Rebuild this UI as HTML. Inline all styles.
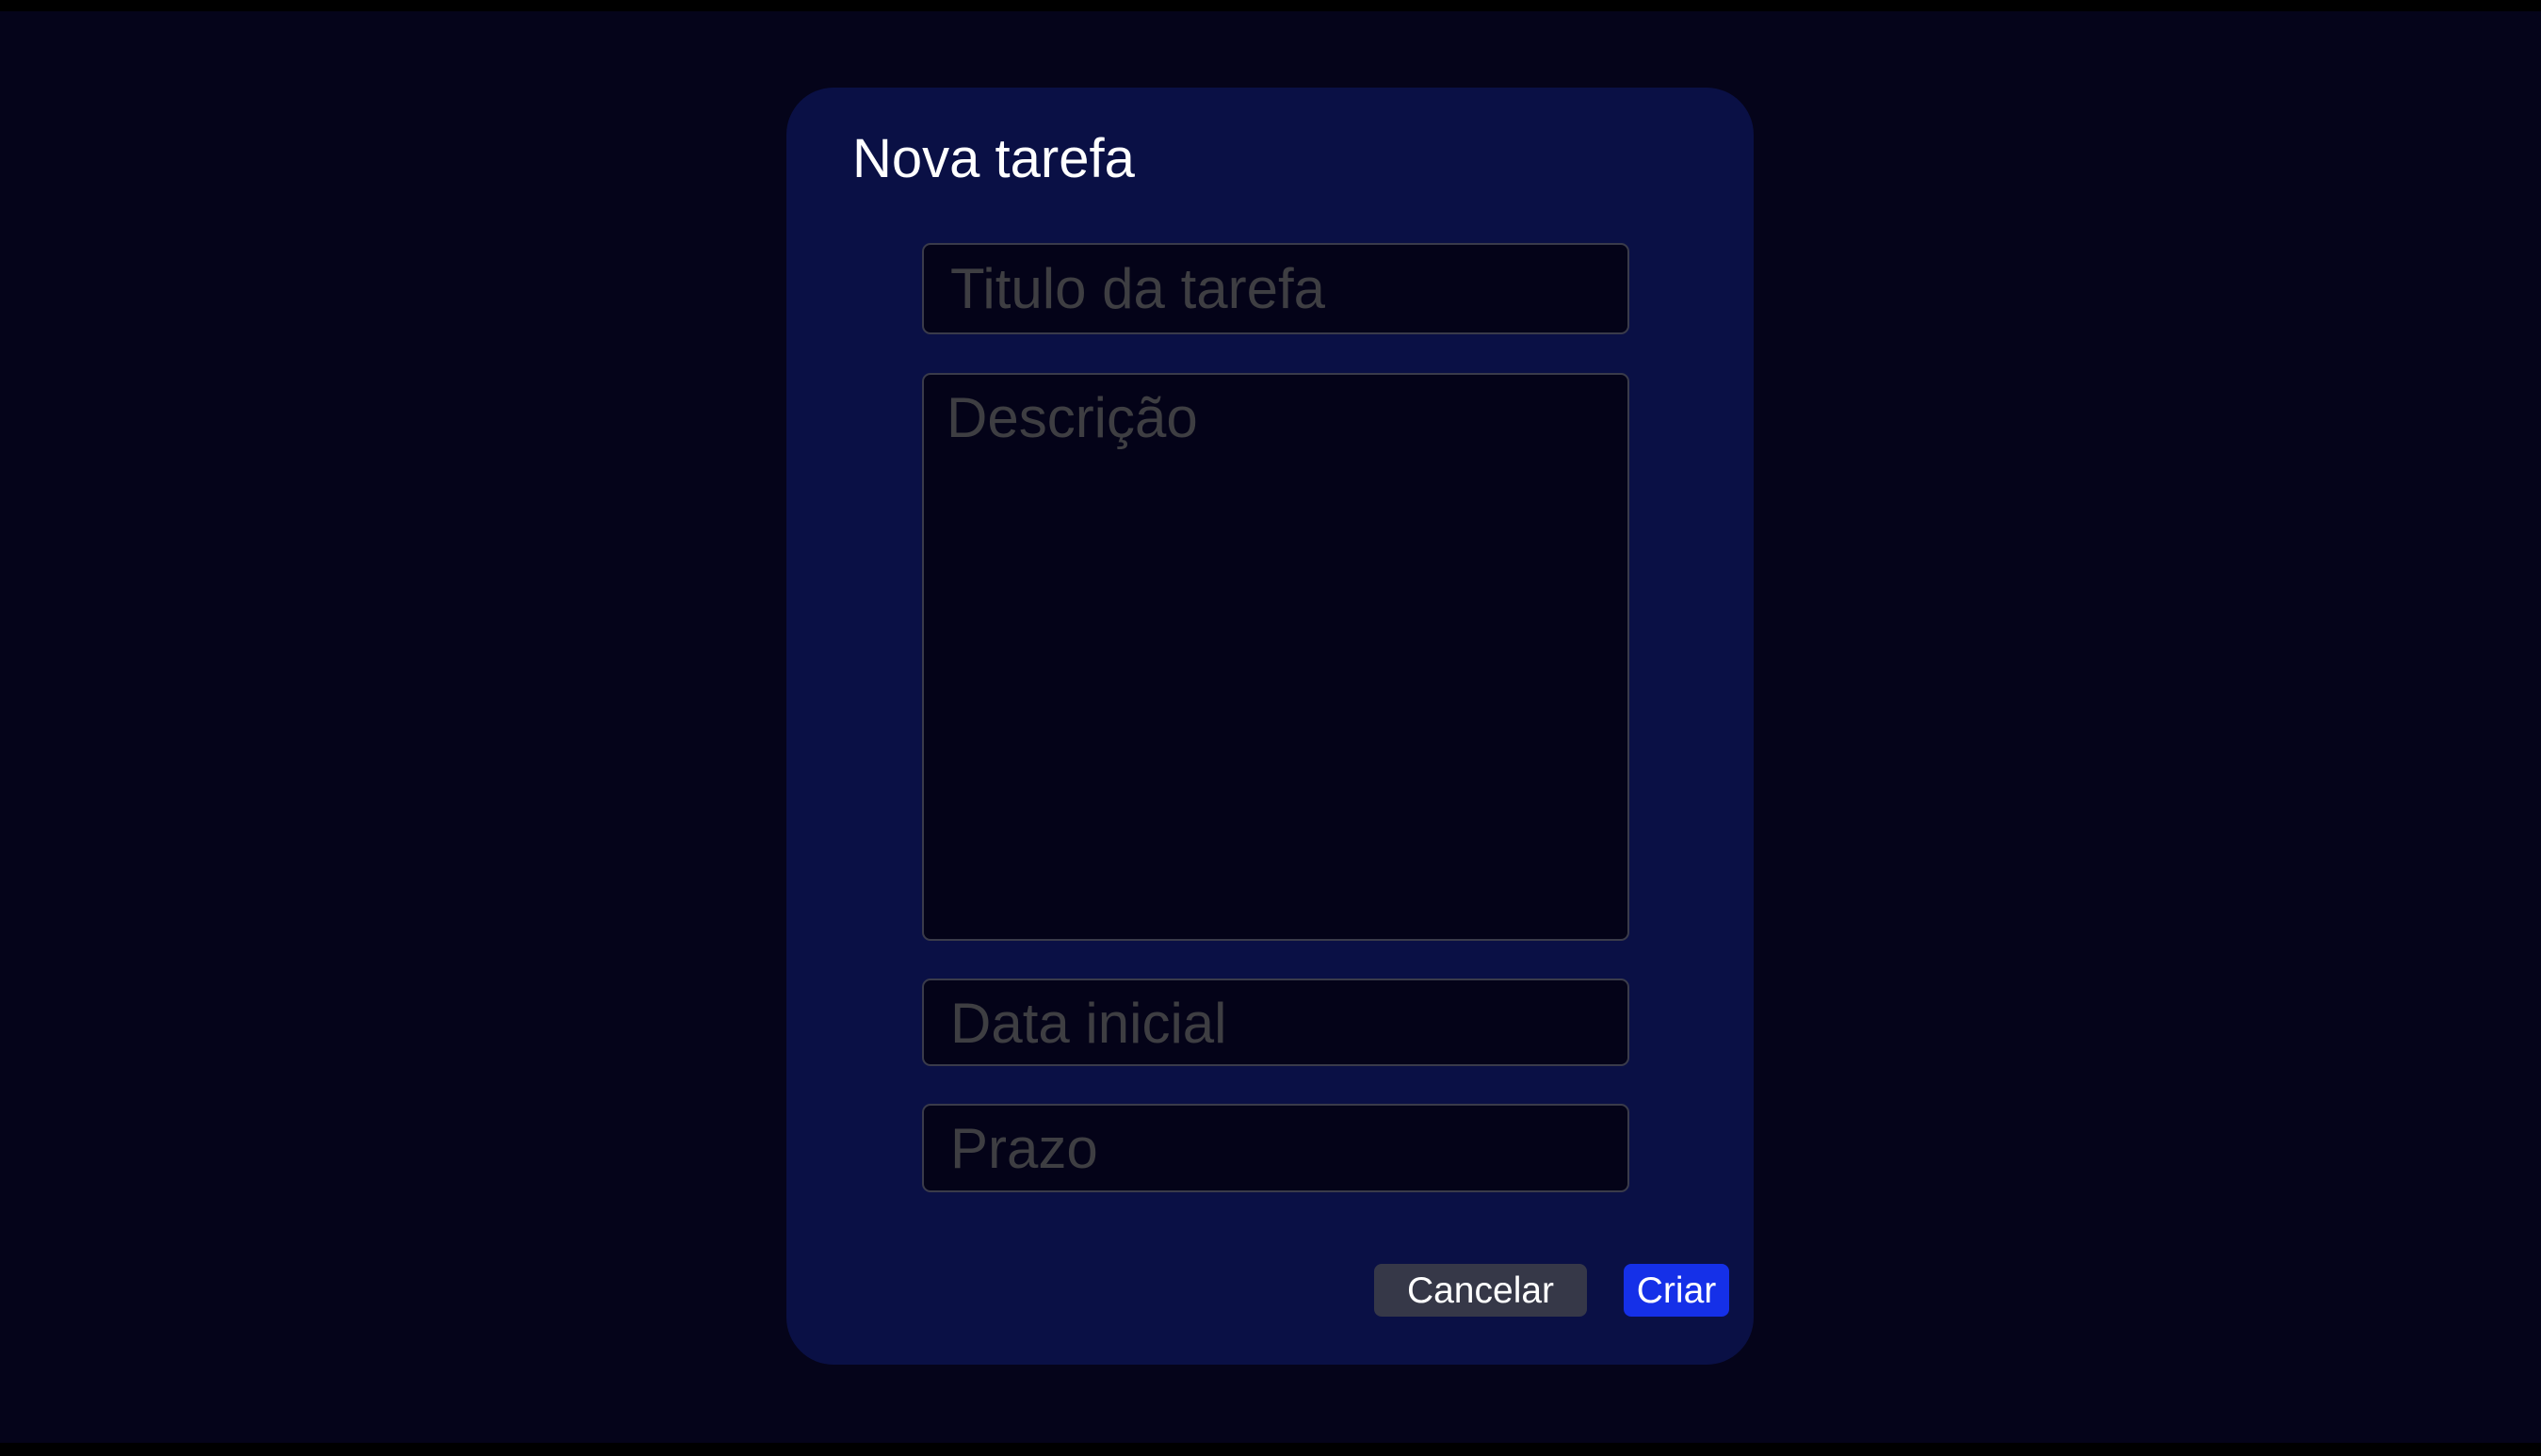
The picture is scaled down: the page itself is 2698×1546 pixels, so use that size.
<!DOCTYPE html>
<html><head><meta charset="utf-8"><style>
html,body{margin:0;padding:0}
body{width:2698px;height:1546px;background:#05041a;position:relative;overflow:hidden;font-family:"Liberation Sans",sans-serif}
.bar{position:absolute;left:0;width:2698px;background:#000}
.card{position:absolute;left:835px;top:93px;width:1027px;height:1356px;background:#0a1045;border-radius:50px}
.t{position:absolute;left:905px;top:134px;color:#fff;font-size:58px;line-height:70px}
.in{position:absolute;left:979px;width:751px;background:#040318;border:2px solid #3a3b4a;border-radius:9px;box-sizing:border-box;color:#3e3e42;font-size:60px}
.in span{position:absolute;left:28px}
.btn{position:absolute;top:1342px;height:56px;border-radius:8px;color:#fff;font-size:39px;line-height:58px;text-align:center}
</style></head><body>
<div class="bar" style="top:0;height:12px"></div>
<div class="bar" style="top:1532px;height:14px"></div>
<div class="card"></div>
<div class="t">Nova tarefa</div>
<div class="in" style="top:258px;height:97px"><span style="top:12px">Titulo da tarefa</span></div>
<div class="in" style="top:396px;height:603px"><span style="top:11px;left:24px">Descrição</span></div>
<div class="in" style="top:1039px;height:93px"><span style="top:11px">Data inicial</span></div>
<div class="in" style="top:1172px;height:94px"><span style="top:11px">Prazo</span></div>
<div class="btn" style="left:1459px;width:226px;background:#363848">Cancelar</div>
<div class="btn" style="left:1724px;width:112px;background:#1530e8">Criar</div>
</body></html>
